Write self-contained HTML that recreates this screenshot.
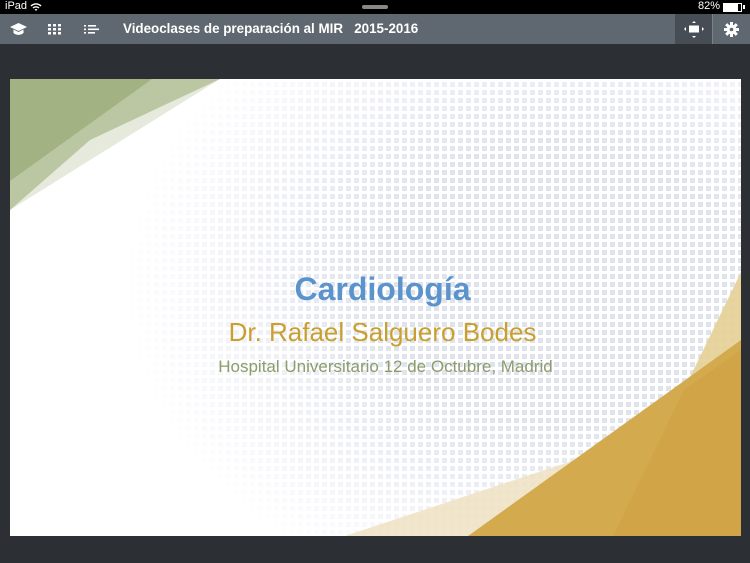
<!DOCTYPE html>
<html><head><meta charset="utf-8"><style>
*{margin:0;padding:0;box-sizing:border-box}
body{width:750px;height:563px;background:#2c3035;position:relative;overflow:hidden;font-family:"Liberation Sans",Arial,sans-serif}
#status{position:absolute;left:0;top:0;width:750px;height:14px;background:#000;color:#fff;font-size:11px}
#bar{position:absolute;left:0;top:14px;width:750px;height:30px;background:#5f6870}
#slide{position:absolute;left:10px;top:79px;width:731px;height:457px;background:#fff;overflow:hidden}
.dots{position:absolute;left:0;top:0;width:731px;height:457px;
background-image:linear-gradient(90deg,transparent 5px,#fff 5px),linear-gradient(0deg,transparent 5px,#fff 5px);
background-color:#dfe3ec;background-size:8px 8px;
-webkit-mask-image:radial-gradient(ellipse 70% 85% at 75% 45%,#000 35%,transparent 85%);mask-image:radial-gradient(ellipse 70% 85% at 75% 45%,#000 35%,transparent 85%)}
.t{position:absolute;left:7px;width:731px;text-align:center;white-space:nowrap}
</style></head><body>
<div id="status">
<span style="position:absolute;left:5px;top:0">iPad</span>
<svg style="position:absolute;left:30px;top:2px" width="12" height="10" viewBox="0 0 12 10"><path d="M1 4a7 7 0 0 1 10 0M3 6a4.5 4.5 0 0 1 6 0M5 8a2 2 0 0 1 2 0" stroke="#fff" stroke-width="1.4" fill="none"/></svg>
<div style="position:absolute;left:362px;top:5px;width:26px;height:4px;border-radius:2px;background:#888"></div>
<span style="position:absolute;left:698px;top:0">82%</span>
<div style="position:absolute;left:723px;top:3px;width:19px;height:9px;border:1px solid #fff"><div style="width:14px;height:7px;background:#fff"></div></div>
<div style="position:absolute;left:743px;top:5px;width:2px;height:4px;background:#fff"></div>
</div>
<div id="bar">
<svg style="position:absolute;left:10px;top:9px" width="17" height="13" viewBox="0 0 17 13"><path d="M8.5 0L17 4 8.5 8 0 4z" fill="#fff"/><path d="M3.5 6.5v3.5c3 2.5 7 2.5 10 0V6.5L8.5 9z" fill="#fff"/></svg>
<svg style="position:absolute;left:48px;top:10px" width="14" height="11" viewBox="0 0 14 11"><g fill="#fff"><rect x="0" y="0" width="3" height="2.5"/><rect x="5" y="0" width="3" height="2.5"/><rect x="10" y="0" width="3" height="2.5"/><rect x="0" y="4" width="3" height="2.5"/><rect x="5" y="4" width="3" height="2.5"/><rect x="10" y="4" width="3" height="2.5"/><rect x="0" y="8" width="3" height="2.5"/><rect x="5" y="8" width="3" height="2.5"/><rect x="10" y="8" width="3" height="2.5"/></g></svg>
<svg style="position:absolute;left:84px;top:11px" width="16" height="9" viewBox="0 0 16 9"><g fill="#fff"><rect x="0" y="0" width="2" height="1.6"/><rect x="4" y="0" width="8" height="1.6"/><rect x="0" y="3.5" width="2" height="1.6"/><rect x="4" y="3.5" width="11" height="1.6"/><rect x="0" y="7" width="2" height="1.6"/><rect x="4" y="7" width="7" height="1.6"/></g></svg>
<div style="position:absolute;left:123px;top:7px;color:#fff;font-weight:bold;font-size:13.4px;white-space:pre">Videoclases de preparación al MIR   2015-2016</div>
<div style="position:absolute;left:675px;top:0;width:37px;height:30px;background:#474d55"></div>
<div style="position:absolute;left:712px;top:0;width:1px;height:30px;background:#7a828a"></div>
<svg style="position:absolute;left:684px;top:7px" width="20" height="17" viewBox="0 0 20 17"><rect x="5" y="4.5" width="10" height="7" fill="#fff"/><g fill="#fff"><path d="M10 0l2 2H8z"/><path d="M10 17l2-2H8z"/><path d="M0 8l2-2v4z"/><path d="M20 8l-2-2v4z"/></g></svg>
<svg style="position:absolute;left:724px;top:8px" width="15" height="15" viewBox="0 0 15 15"><g fill="#fff" transform="translate(7.5 7.5)"><circle r="4.8"/><rect x="-1.5" y="-7.5" width="3" height="15"/><rect x="-1.5" y="-7.5" width="3" height="15" transform="rotate(45)"/><rect x="-1.5" y="-7.5" width="3" height="15" transform="rotate(90)"/><rect x="-1.5" y="-7.5" width="3" height="15" transform="rotate(135)"/></g><circle cx="7.5" cy="7.5" r="1.8" fill="#5f6870"/></svg>
</div>
<div id="slide">
<div class="dots"></div>
<svg style="position:absolute;left:0;top:0" width="731" height="457" viewBox="10 79 731 457">
<polygon points="10,79 220,79 10,210" fill="#dfe5d3" opacity="0.8"/>
<polygon points="68,79 220,79 90,140 10,210 10,150" fill="#b6c29b" opacity="0.9"/>
<polygon points="10,79 152,79 10,181" fill="#a3b283"/>
<polygon points="345,536 741,405 741,536" fill="#efe2c2" opacity="0.85"/>
<polygon points="613,536 741,272 741,536" fill="#e6cf95" opacity="0.9"/>
<polygon points="468,536 741,340 741,536" fill="#d3aa4e"/>
<polygon points="613,536 684,390 741,350 741,536" fill="#cfa346" opacity="0.8"/>
</svg>
<div class="t" style="top:192px;font-size:32px;font-weight:bold;color:#5b93cc">Cardiología</div>
<div class="t" style="top:238px;font-size:26px;color:#c9a030">Dr. Rafael Salguero Bodes</div>
<div class="t" style="top:278px;font-size:17px;left:10px;color:#8c9c6c">Hospital Universitario 12 de Octubre, Madrid</div>
</div>
</body></html>
